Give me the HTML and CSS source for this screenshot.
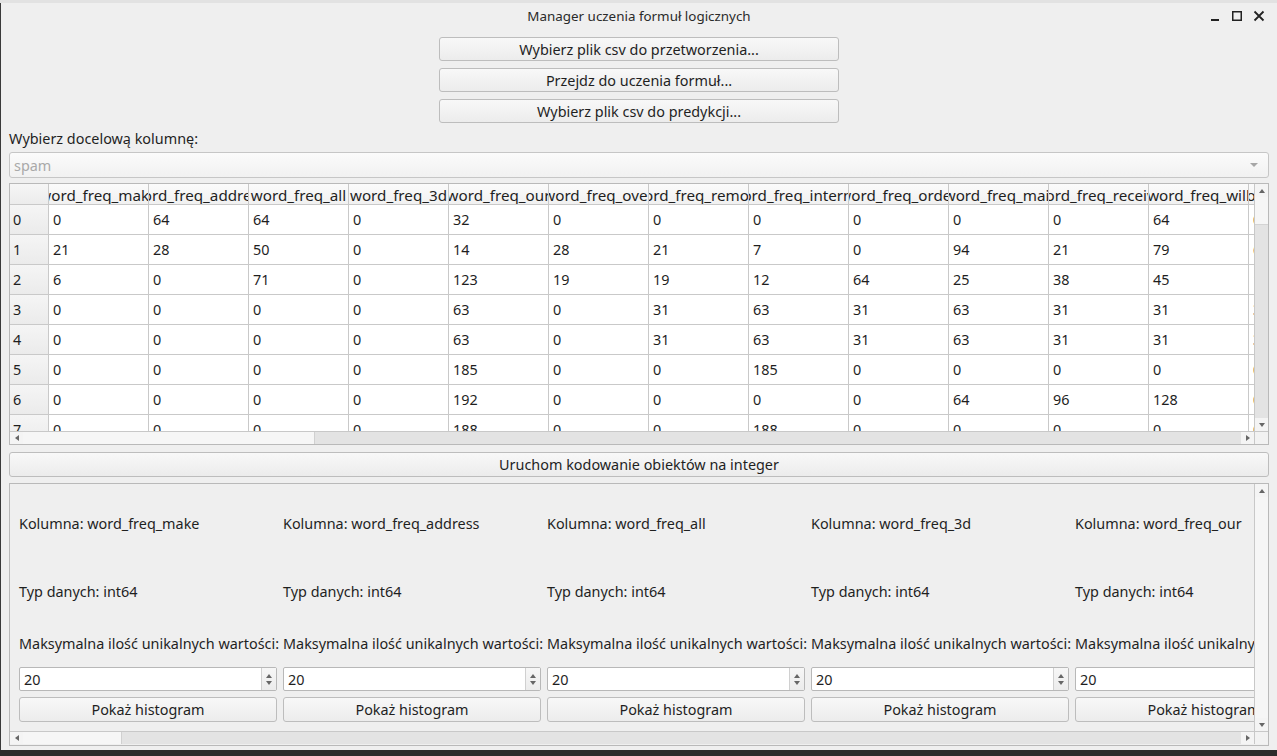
FILE: index.html
```html
<!DOCTYPE html>
<html lang="pl">
<head>
<meta charset="utf-8">
<title>Manager uczenia formuł logicznych</title>
<link rel="stylesheet" href="styles.css">
</head>
<body>
<div class="topstrip"></div>
<div class="window">
  <div class="titlebar">
    <div></div>
    <div class="title">Manager uczenia formuł logicznych</div>
    <div class="controls">
      <svg class="ctl" width="12" height="12" viewBox="0 0 12 12"><rect x="2" y="9" width="8" height="2" fill="#222"/></svg>
      <svg class="ctl" width="12" height="12" viewBox="0 0 12 12"><rect x="1.75" y="1.75" width="8.5" height="8.5" fill="none" stroke="#222" stroke-width="1.5"/></svg>
      <svg class="ctl" width="12" height="12" viewBox="0 0 12 12"><path d="M1.5 1.5 L10.5 10.5 M10.5 1.5 L1.5 10.5" stroke="#222" stroke-width="1.8"/></svg>
    </div>
  </div>

  <div class="topbuttons">
    <div class="btn wide">Wybierz plik csv do przetworzenia...</div>
    <div class="btn wide">Przejdz do uczenia formuł...</div>
    <div class="btn wide">Wybierz plik csv do predykcji...</div>
  </div>

  <div class="main">
    <div class="label">Wybierz docelową kolumnę:</div>
    <div class="combo"><span>spam</span><i class="combo-arrow"></i></div>

    <div class="table">
      <div class="tbody">
        <div class="tview">
          <div class="grid">
            <div class="corner"></div>
            <div class="hh"><span>word_freq_make</span></div>
            <div class="hh"><span>word_freq_address</span></div>
            <div class="hh"><span>word_freq_all</span></div>
            <div class="hh"><span>word_freq_3d</span></div>
            <div class="hh"><span>word_freq_our</span></div>
            <div class="hh"><span>word_freq_over</span></div>
            <div class="hh"><span>word_freq_remove</span></div>
            <div class="hh"><span>word_freq_internet</span></div>
            <div class="hh"><span>word_freq_order</span></div>
            <div class="hh"><span>word_freq_mail</span></div>
            <div class="hh"><span>word_freq_receive</span></div>
            <div class="hh"><span>word_freq_will</span></div>
            <div class="hh"><span>word_freq_people</span></div>

            <div class="vh">0</div><div class="c">0</div><div class="c">64</div><div class="c">64</div><div class="c">0</div><div class="c">32</div><div class="c">0</div><div class="c">0</div><div class="c">0</div><div class="c">0</div><div class="c">0</div><div class="c">0</div><div class="c">64</div><div class="c">0</div>
            <div class="vh">1</div><div class="c">21</div><div class="c">28</div><div class="c">50</div><div class="c">0</div><div class="c">14</div><div class="c">28</div><div class="c">21</div><div class="c">7</div><div class="c">0</div><div class="c">94</div><div class="c">21</div><div class="c">79</div><div class="c">6</div>
            <div class="vh">2</div><div class="c">6</div><div class="c">0</div><div class="c">71</div><div class="c">0</div><div class="c">123</div><div class="c">19</div><div class="c">19</div><div class="c">12</div><div class="c">64</div><div class="c">25</div><div class="c">38</div><div class="c">45</div><div class="c">12</div>
            <div class="vh">3</div><div class="c">0</div><div class="c">0</div><div class="c">0</div><div class="c">0</div><div class="c">63</div><div class="c">0</div><div class="c">31</div><div class="c">63</div><div class="c">31</div><div class="c">63</div><div class="c">31</div><div class="c">31</div><div class="c">31</div>
            <div class="vh">4</div><div class="c">0</div><div class="c">0</div><div class="c">0</div><div class="c">0</div><div class="c">63</div><div class="c">0</div><div class="c">31</div><div class="c">63</div><div class="c">31</div><div class="c">63</div><div class="c">31</div><div class="c">31</div><div class="c">31</div>
            <div class="vh">5</div><div class="c">0</div><div class="c">0</div><div class="c">0</div><div class="c">0</div><div class="c">185</div><div class="c">0</div><div class="c">0</div><div class="c">185</div><div class="c">0</div><div class="c">0</div><div class="c">0</div><div class="c">0</div><div class="c">0</div>
            <div class="vh">6</div><div class="c">0</div><div class="c">0</div><div class="c">0</div><div class="c">0</div><div class="c">192</div><div class="c">0</div><div class="c">0</div><div class="c">0</div><div class="c">0</div><div class="c">64</div><div class="c">96</div><div class="c">128</div><div class="c">0</div>
            <div class="vh">7</div><div class="c">0</div><div class="c">0</div><div class="c">0</div><div class="c">0</div><div class="c">188</div><div class="c">0</div><div class="c">0</div><div class="c">188</div><div class="c">0</div><div class="c">0</div><div class="c">0</div><div class="c">0</div><div class="c">0</div>
          </div>
        </div>
        <div class="vscroll">
          <div class="sarrow"><i class="tri up"></i></div>
          <div class="shandle vh1"></div>
          <div class="sgroove"></div>
          <div class="sarrow"><i class="tri down"></i></div>
        </div>
      </div>
      <div class="hrow">
        <div class="hscroll">
          <div class="sarrow h"><i class="tri left"></i></div>
          <div class="shandle hh1"></div>
          <div class="sgroove"></div>
          <div class="sarrow h"><i class="tri right"></i></div>
        </div>
        <div class="scorner"></div>
      </div>
    </div>

    <div class="btn full">Uruchom kodowanie obiektów na integer</div>

    <div class="scrollarea">
      <div class="sabody">
        <div class="saview">
          <div class="cols">
            <div class="col">
              <div class="l1">Kolumna: word_freq_make</div>
              <div class="l2">Typ danych: int64</div>
              <div class="l3">Maksymalna ilość unikalnych wartości:</div>
              <div class="spin"><span>20</span><div class="spinbtns"><i class="tri up"></i><i class="tri down"></i></div></div>
              <div class="btn hist">Pokaż histogram</div>
            </div>
            <div class="col">
              <div class="l1">Kolumna: word_freq_address</div>
              <div class="l2">Typ danych: int64</div>
              <div class="l3">Maksymalna ilość unikalnych wartości:</div>
              <div class="spin"><span>20</span><div class="spinbtns"><i class="tri up"></i><i class="tri down"></i></div></div>
              <div class="btn hist">Pokaż histogram</div>
            </div>
            <div class="col">
              <div class="l1">Kolumna: word_freq_all</div>
              <div class="l2">Typ danych: int64</div>
              <div class="l3">Maksymalna ilość unikalnych wartości:</div>
              <div class="spin"><span>20</span><div class="spinbtns"><i class="tri up"></i><i class="tri down"></i></div></div>
              <div class="btn hist">Pokaż histogram</div>
            </div>
            <div class="col">
              <div class="l1">Kolumna: word_freq_3d</div>
              <div class="l2">Typ danych: int64</div>
              <div class="l3">Maksymalna ilość unikalnych wartości:</div>
              <div class="spin"><span>20</span><div class="spinbtns"><i class="tri up"></i><i class="tri down"></i></div></div>
              <div class="btn hist">Pokaż histogram</div>
            </div>
            <div class="col">
              <div class="l1">Kolumna: word_freq_our</div>
              <div class="l2">Typ danych: int64</div>
              <div class="l3">Maksymalna ilość unikalnych wartości:</div>
              <div class="spin"><span>20</span><div class="spinbtns"><i class="tri up"></i><i class="tri down"></i></div></div>
              <div class="btn hist">Pokaż histogram</div>
            </div>
          </div>
        </div>
        <div class="vscroll sav">
          <div class="sarrow"><i class="tri up"></i></div>
          <div class="shandle full"></div>
          <div class="sarrow"><i class="tri down"></i></div>
        </div>
      </div>
      <div class="hrow">
        <div class="hscroll">
          <div class="sarrow h"><i class="tri left"></i></div>
          <div class="shandle hh2"></div>
          <div class="sgroove"></div>
          <div class="sarrow h"><i class="tri right"></i></div>
        </div>
        <div class="scorner"></div>
      </div>
    </div>
  </div>
</div>
</body>
</html>
```

FILE: styles.css
```css
* { box-sizing: border-box; }
html, body { margin: 0; padding: 0; }
body {
  width: 1277px;
  height: 756px;
  overflow: hidden;
  background: #2c2c2c;
  font-family: "Noto Sans", "DejaVu Sans", sans-serif;
  font-size: 14.4px;
  color: #1f1f1f;
}
.topstrip { height: 3px; background: #e2e2e2; }
.window {
  height: 747px;
  background: #efefef;
  border-left: 1px solid #3a3a3a;
  display: flex;
  flex-direction: column;
}

/* title bar */
.titlebar {
  height: 26px;
  display: grid;
  grid-template-columns: 1fr auto 1fr;
  align-items: center;
}
.title { font-size: 13.4px; color: #2a2a2a; }
.controls {
  display: flex;
  justify-content: flex-end;
  gap: 10px;
  padding-right: 12px;
}
.ctl { display: block; }

/* buttons */
.btn {
  border: 1px solid #bdbdbd;
  border-radius: 3px;
  background: linear-gradient(#f8f8f8, #ececec);
  display: flex;
  align-items: center;
  justify-content: center;
  white-space: nowrap;
  overflow: hidden;
}
.topbuttons {
  margin-top: 8px;
  display: flex;
  flex-direction: column;
  align-items: center;
  gap: 7px;
}
.btn.wide { width: 400px; height: 24px; }

.main {
  padding: 0 8px 0 8px;
  display: flex;
  flex-direction: column;
}
.label { margin-top: 7px; height: 17px; line-height: 17px; }

.combo {
  margin-top: 5px;
  height: 26px;
  border: 1px solid #c6c6c6;
  border-radius: 3px;
  background: linear-gradient(#fbfbfb, #f1f1f1);
  display: flex;
  align-items: center;
  justify-content: space-between;
  padding: 0 10px 0 4px;
  color: #a9a9a9;
}
.combo-arrow {
  width: 0; height: 0;
  border-left: 4px solid transparent;
  border-right: 4px solid transparent;
  border-top: 4px solid #a6a6a6;
}

/* table */
.table {
  margin-top: 5px;
  height: 262px;
  border: 1px solid #b9b9b9;
  display: flex;
  flex-direction: column;
  background: #fff;
}
.tbody { display: flex; height: 247px; }
.tview { width: 1244px; overflow: hidden; }
.grid {
  display: grid;
  grid-template-columns: 39px repeat(13, 100px);
  grid-template-rows: 21px repeat(8, 30px);
}
.corner, .hh, .vh, .c { border-right: 1px solid #c9c9c9; border-bottom: 1px solid #c9c9c9; }
.corner { background: linear-gradient(#f6f6f6, #ececec); }
.hh {
  background: linear-gradient(#fbfbfb, #f1f1f1);
  display: flex;
  justify-content: center;
  align-items: center;
  overflow: hidden;
  white-space: nowrap;
  line-height: 22px;
  font-size: 15.2px;
  padding-top: 2px;
}
.vh {
  background: linear-gradient(#f5f5f5, #ebebeb);
  padding-left: 3px;
  line-height: 29px;
}
.c { background: #fff; padding-left: 4px; line-height: 29px; white-space: nowrap; overflow: hidden; }

/* scrollbars */
.vscroll {
  width: 14px;
  border-left: 1px solid #c8c8c8;
  display: flex;
  flex-direction: column;
  background: #e3e3e3;
}
.sarrow {
  height: 13px;
  background: #f4f4f4;
  display: flex;
  align-items: center;
  justify-content: center;
  flex: none;
}
.sarrow.h { width: 13px; height: auto; }
.shandle { background: #f6f6f6; flex: none; }
.shandle.vh1 { height: 28px; border-bottom: 1px solid #d4d4d4; }
.shandle.full { flex: 1; }
.sgroove { flex: 1; background: #e3e3e3; }
.hrow { display: flex; height: 13px; border-top: 1px solid #c8c8c8; }
.hscroll { width: 1244px; display: flex; background: #e3e3e3; }
.shandle.hh1 { width: 292px; border-right: 1px solid #d0d0d0; }
.shandle.hh2 { width: 99px; border-right: 1px solid #d0d0d0; }
.scorner { flex: 1; background: #f2f2f2; border-left: 1px solid #c8c8c8; }
.tri { width: 0; height: 0; display: block; }
.tri.up { border-left: 3px solid transparent; border-right: 3px solid transparent; border-bottom: 4px solid #666; }
.tri.down { border-left: 3px solid transparent; border-right: 3px solid transparent; border-top: 4px solid #666; }
.tri.left { border-top: 3px solid transparent; border-bottom: 3px solid transparent; border-right: 4px solid #666; }
.tri.right { border-top: 3px solid transparent; border-bottom: 3px solid transparent; border-left: 4px solid #666; }

.btn.full { margin-top: 7px; height: 25px; }

/* scroll area */
.scrollarea {
  margin-top: 6px;
  height: 263px;
  border: 1px solid #b9b9b9;
  display: flex;
  flex-direction: column;
}
.sabody { display: flex; height: 247px; }
.saview { width: 1244px; overflow: hidden; }
.vscroll.sav { background: #f6f6f6; }
.cols {
  display: flex;
  gap: 6px;
  padding-left: 9px;
  padding-top: 30px;
}
.col { width: 258px; flex: none; display: flex; flex-direction: column; }
.l1, .l2, .l3 { height: 20px; line-height: 20px; white-space: nowrap; }
.l2 { margin-top: 48px; }
.l3 { margin-top: 32px; }
.spin {
  margin-top: 13px;
  height: 24px;
  border: 1px solid #b8b8b8;
  border-radius: 2px;
  background: #fff;
  display: flex;
  align-items: center;
  justify-content: space-between;
  padding-left: 4px;
}
.spinbtns {
  width: 15px;
  height: 100%;
  border-left: 1px solid #d0d0d0;
  background: linear-gradient(#f7f7f7, #ececec);
  display: flex;
  flex-direction: column;
  align-items: center;
  justify-content: center;
  gap: 3px;
}
.btn.hist { margin-top: 6px; height: 25px; }
```
